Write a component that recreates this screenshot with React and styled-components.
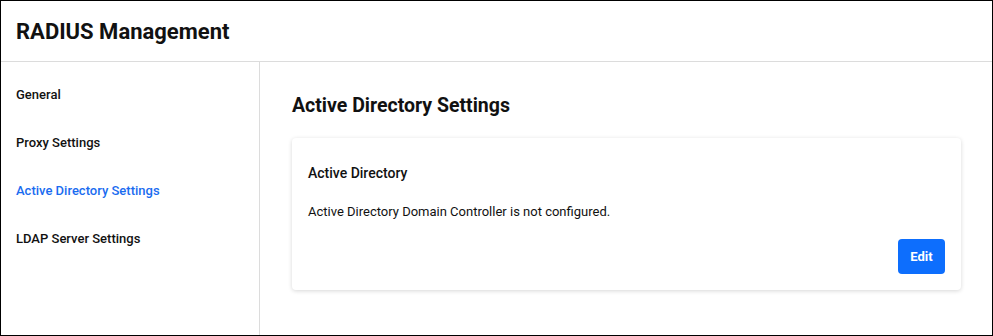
import React from 'react'
import styled, { createGlobalStyle } from 'styled-components'

const GlobalStyle = createGlobalStyle`
  body {
    margin: 0;
    font-family: Roboto, "Liberation Sans", Arial, sans-serif;
    color: #111;
    background: #fff;
  }
  * { box-sizing: border-box; }
`

const Page = styled.div`
  width: 993px;
  height: 336px;
  border: 1px solid #000;
  display: flex;
  flex-direction: column;
`

const Header = styled.header`
  height: 61px;
  flex-shrink: 0;
  display: flex;
  align-items: center;
  padding-left: 15px;
  border-bottom: 1px solid #dcdcdc;
`

const Title = styled.h1`
  margin: 0;
  font-size: 22px;
  font-weight: 700;
`

const Body = styled.div`
  flex: 1;
  display: flex;
`

const Sidebar = styled.nav`
  width: 259px;
  flex-shrink: 0;
  border-right: 1px solid #dcdcdc;
  padding-top: 8px;
`

const NavItem = styled.div`
  height: 48px;
  display: flex;
  align-items: center;
  padding-left: 15px;
  font-size: 13px;
  font-weight: 500;
  color: ${p => (p.$active ? '#1a6cf0' : '#111')};
  cursor: pointer;
`

const Main = styled.main`
  flex: 1;
  padding: 32px 31px 0 32px;
`

const Heading = styled.h2`
  margin: 0 0 20px;
  font-size: 19.5px;
  line-height: 24px;
  font-weight: 700;
`

const Card = styled.section`
  border-radius: 4px;
  box-shadow: 0 1px 4px rgba(0, 0, 0, 0.16);
  padding: 25px 16px 16px;
  display: flex;
  flex-direction: column;
`

const CardTitle = styled.h3`
  margin: 0 0 20px;
  font-size: 14px;
  line-height: 20px;
  font-weight: 500;
`

const CardText = styled.p`
  margin: 0 0 18px;
  font-size: 13px;
  line-height: 18px;
`

const Actions = styled.div`
  display: flex;
  justify-content: flex-end;
`

const Button = styled.button`
  width: 47px;
  height: 35px;
  border: none;
  border-radius: 4px;
  background: #0d6efd;
  color: #fff;
  font-family: inherit;
  font-size: 13px;
  font-weight: 700;
  cursor: pointer;
`

const navItems = ['General', 'Proxy Settings', 'Active Directory Settings', 'LDAP Server Settings']

const App = () => {
  return (
    <>
      <GlobalStyle />
      <Page>
        <Header>
          <Title>RADIUS Management</Title>
        </Header>
        <Body>
          <Sidebar>
            {navItems.map(item => (
              <NavItem key={item} $active={item === 'Active Directory Settings'}>
                {item}
              </NavItem>
            ))}
          </Sidebar>
          <Main>
            <Heading>Active Directory Settings</Heading>
            <Card>
              <CardTitle>Active Directory</CardTitle>
              <CardText>Active Directory Domain Controller is not configured.</CardText>
              <Actions>
                <Button>Edit</Button>
              </Actions>
            </Card>
          </Main>
        </Body>
      </Page>
    </>
  )
}

export default App
